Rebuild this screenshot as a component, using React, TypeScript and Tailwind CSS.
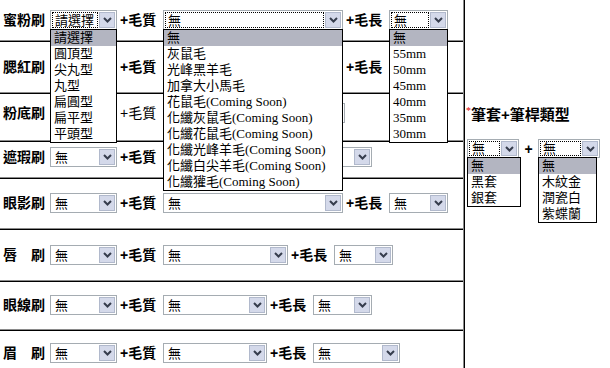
const SERIF = "font-['Liberation_Serif','Noto_Sans_CJK_TC',serif]";
const BOLD = "font-['Liberation_Sans','Noto_Sans_CJK_TC',sans-serif] font-bold";

const TIPS = ["請選擇", "圓頂型", "尖丸型", "丸型", "扁圓型", "扁平型", "平頭型"];
const HAIR = [
  "無",
  "灰鼠毛",
  "光峰黑羊毛",
  "加拿大小馬毛",
  "花鼠毛(Coming Soon)",
  "化纖灰鼠毛(Coming Soon)",
  "化纖花鼠毛(Coming Soon)",
  "化纖光峰羊毛(Coming Soon)",
  "化纖白尖羊毛(Coming Soon)",
  "化纖獾毛(Coming Soon)",
];
const LENGTHS = ["無", "55mm", "50mm", "45mm", "40mm", "35mm", "30mm"];
const CAPS = ["無", "黑套", "銀套"];
const SHAFTS = ["無", "木紋金", "潤瓷白", "紫蝶蘭"];

function Arrow() {
  return (
    <div className="my-px mr-px flex w-[16px] shrink-0 items-center justify-center border border-[#b1b9cc] bg-[#d4d9ea]">
      <svg width="9" height="6" viewBox="0 0 9 6">
        <path d="M1 1l3.5 3.5L8 1" fill="none" stroke="#363d4d" strokeWidth="2" />
      </svg>
    </div>
  );
}

type SelProps = {
  className: string;
  value?: string;
  focus?: boolean;
  list?: string[];
  listClass?: string;
};

// looks like an open win-xp <select>; the list is drawn over the rows below
function Sel({ className, value = "無", focus, list, listClass = "-right-px" }: SelProps) {
  return (
    <div className={`relative flex shrink-0 border border-[#a5acb2] bg-white ${className}`}>
      <div
        className={`m-px flex min-w-0 flex-1 items-center overflow-hidden whitespace-nowrap border border-dotted pl-[2px] leading-none ${
          focus ? "border-black" : "border-transparent"
        }`}
      >
        {value}
      </div>
      <Arrow />
      {list && (
        <div className={`absolute -left-px top-full z-10 border border-black bg-white ${listClass}`}>
          {list.map((item, i) => (
            <div
              key={item}
              className={`h-4 whitespace-nowrap pl-[3px] leading-4 ${i === 0 ? "bg-[#b3b5c1]" : ""}`}
            >
              {item}
            </div>
          ))}
        </div>
      )}
    </div>
  );
}

function Label({ children }: { children: string }) {
  return <span className={`ml-[3px] w-[47px] shrink-0 text-[14px] leading-none ${BOLD}`}>{children}</span>;
}

function Plus({ children, thin }: { children: string; thin?: boolean }) {
  return (
    <span
      className={`ml-[3px] w-[43px] shrink-0 text-[14px] leading-none font-['Liberation_Sans','Noto_Sans_CJK_TC',sans-serif] ${
        thin ? "font-normal" : "font-bold"
      }`}
    >
      {children}
    </span>
  );
}

function Line() {
  return <div className="h-[2px] border-t border-b border-t-[#8a8a8a] border-b-black" />;
}

export default function App() {
  return (
    <div className={`flex h-[368px] w-[610px] overflow-hidden bg-white text-[13px] text-black ${SERIF}`}>
      <div className="w-[465px] shrink-0 border-r border-black">
        <div className="h-full border-r border-[#8a8a8a]">
          <div className="h-[40px] pt-[10px]">
            <div className="flex h-5 items-center">
              <Label>蜜粉刷</Label>
              <Sel className="h-5 w-[67px]" value="請選擇" focus list={TIPS} />
              <Plus>+毛質</Plus>
              <Sel className="h-5 w-[180px]" focus list={HAIR} />
              <Plus>+毛長</Plus>
              <Sel className="h-5 w-[59px]" focus list={LENGTHS} />
            </div>
          </div>
          <Line />
          {/* selects in rows 2-3 sit under the open lists, so no value is drawn */}
          <div className="h-[50px] pt-[15px]">
            <div className="flex h-5 items-center">
              <Label>腮紅刷</Label>
              <Sel className="h-5 w-[67px]" value="" />
              <Plus>+毛質</Plus>
              <Sel className="h-5 w-[180px]" value="" />
              <Plus>+毛長</Plus>
              <Sel className="h-5 w-[59px]" value="" />
            </div>
          </div>
          <Line />
          <div className="h-[46px] pt-[9px]">
            <div className="flex h-5 items-center">
              <Label>粉底刷</Label>
              <Sel className="h-5 w-[67px]" value="" />
              <Plus thin>+毛質</Plus>
              <Sel className="h-5 w-[182px]" value="" />
            </div>
          </div>
          <Line />
          <div className="h-[35px] pt-[5px]">
            <div className="flex h-5 items-center">
              <Label>遮瑕刷</Label>
              <Sel className="h-5 w-[67px]" />
              <Plus>+毛質</Plus>
              <Sel className="h-5 w-[209px]" value="" />
            </div>
          </div>
          <Line />
          <div className="h-[49px] pt-[14px]">
            <div className="flex h-5 items-center">
              <Label>眼影刷</Label>
              <Sel className="h-5 w-[67px]" />
              <Plus>+毛質</Plus>
              <Sel className="h-5 w-[180px]" />
              <Plus>+毛長</Plus>
              <Sel className="h-5 w-[59px]" />
            </div>
          </div>
          <Line />
          <div className="h-[50px] pt-[15px]">
            <div className="flex h-5 items-center">
              <Label>唇　刷</Label>
              <Sel className="h-5 w-[67px]" />
              <Plus>+毛質</Plus>
              <Sel className="h-5 w-[125px]" />
              <Plus>+毛長</Plus>
              <Sel className="h-5 w-[59px]" />
            </div>
          </div>
          <Line />
          <div className="h-[47px] pt-[13px]">
            <div className="flex h-5 items-center">
              <Label>眼線刷</Label>
              <Sel className="h-5 w-[67px]" />
              <Plus>+毛質</Plus>
              <Sel className="h-5 w-[104px]" />
              <Plus>+毛長</Plus>
              <Sel className="h-5 w-[59px]" />
            </div>
          </div>
          <Line />
          <div className="h-[45px] pt-[12px]">
            <div className="flex h-5 items-center">
              <Label>眉　刷</Label>
              <Sel className="h-5 w-[67px]" />
              <Plus>+毛質</Plus>
              <Sel className="h-5 w-[104px]" />
              <Plus>+毛長</Plus>
              <Sel className="h-5 w-[87px]" />
            </div>
          </div>
        </div>
      </div>

      <div className="flex-1 pt-[104px]">
        <div className="flex h-5 items-center pl-px">
          <span className="mb-[6px] text-[10px] leading-none text-[#e00000]">*</span>
          <span className={`text-[15px] leading-none ${BOLD}`}>筆套+筆桿類型</span>
        </div>
        <div className="mt-[15px] flex items-center pl-[2px]">
          <Sel className="h-[19px] w-[52px]" focus list={CAPS} listClass="w-[54px]" />
          <span className={`w-[19px] text-center text-[14px] leading-none ${BOLD}`}>+</span>
          <Sel className="h-[19px] w-[62px]" focus list={SHAFTS} listClass="w-[59px]" />
        </div>
      </div>
    </div>
  );
}
